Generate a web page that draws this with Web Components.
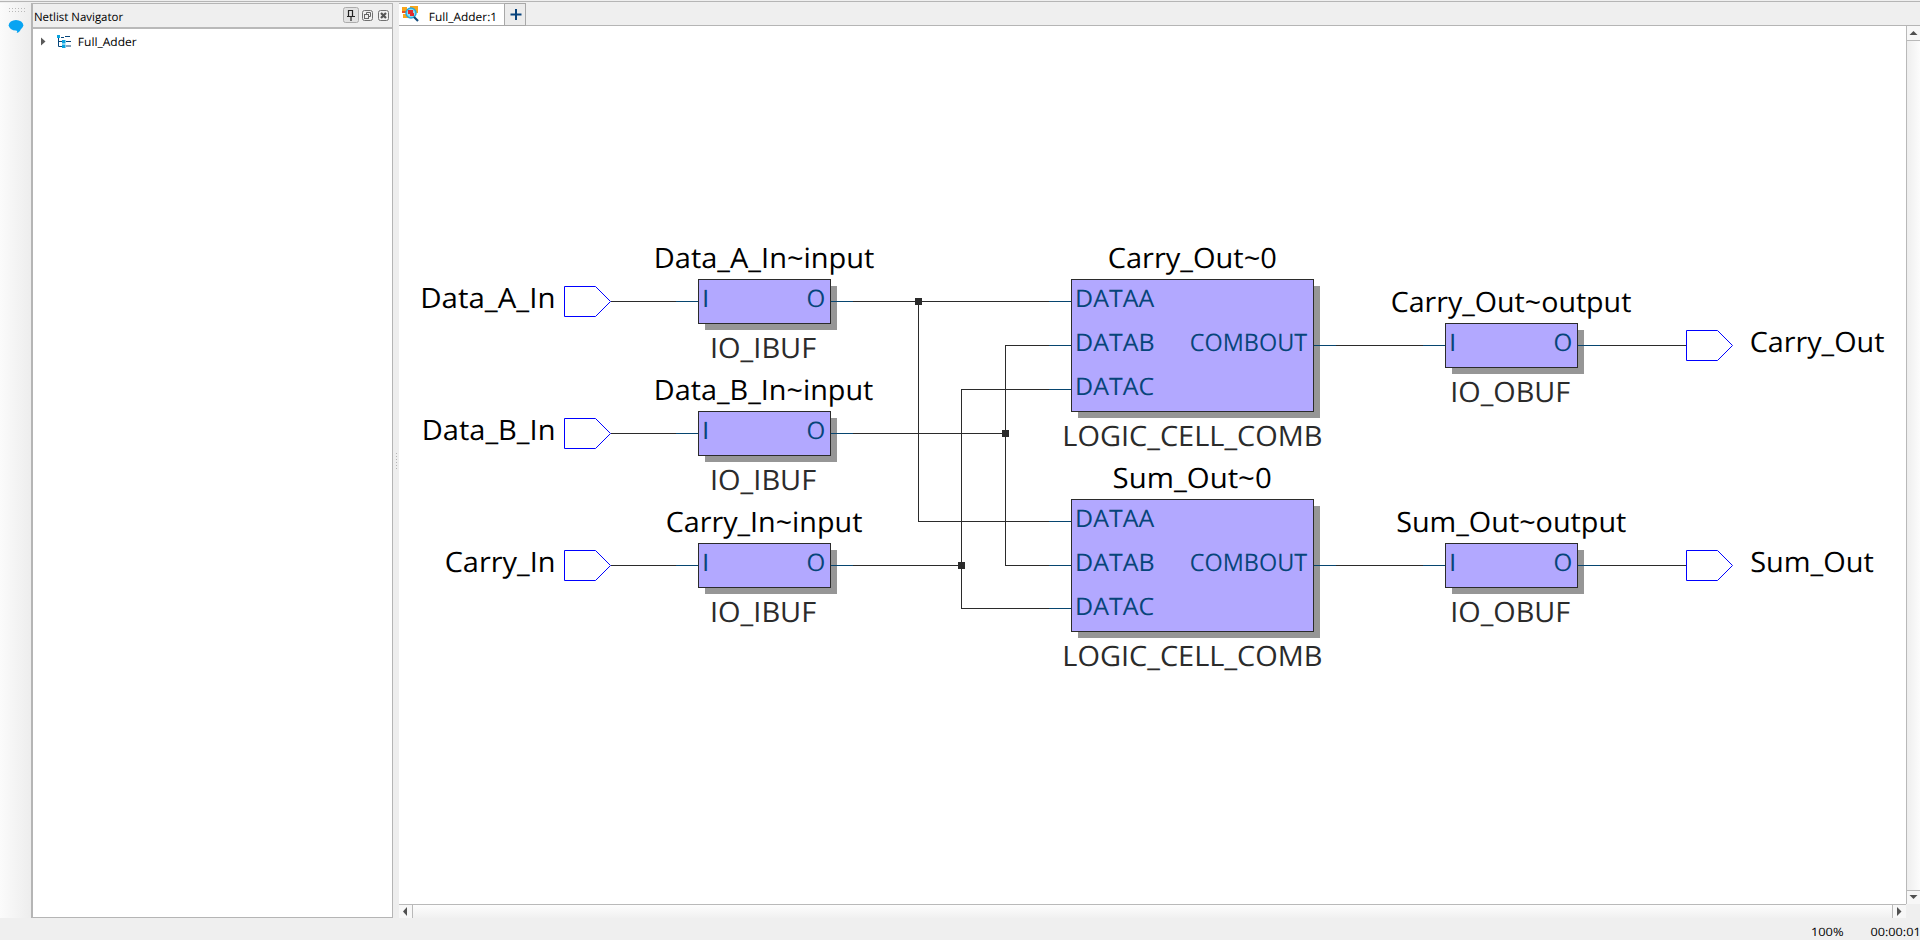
<!DOCTYPE html>
<html lang="en">
<head>
<meta charset="utf-8">
<title>Netlist Viewer</title>
<style>
html,body{margin:0;height:100%;overflow:hidden}
body{font:12px "Open Sans","Noto Sans",sans-serif;color:#000;background:#efefef}
</style>
</head>
<body>
<netlist-app></netlist-app>
<script>
const SVG = 'http://www.w3.org/2000/svg';
const ctx = document.createElement('canvas').getContext('2d');

class BaseElement extends HTMLElement {
  connectedCallback() {
    if (this.shadowRoot) return;
    this.attachShadow({mode: 'open'}).innerHTML = this.render();
    this.ready && this.ready();
  }
}

/* One line of UI text whose ink runs exactly over the given width. */
customElements.define('fit-label', class extends BaseElement {
  render() {
    return `<style>:host{display:block;flex:none;width:${this.getAttribute('w')}px;height:16px}
      svg{display:block;overflow:visible}text{font-family:"Open Sans","Noto Sans",sans-serif}</style>
      <svg width="100%" height="16"></svg>`;
  }
  ready() {
    this.shadowRoot.querySelector('svg').append(
      inkText(this.getAttribute('text'), 0, +this.getAttribute('w'), 12, +(this.getAttribute('size') || 11.5), '#000'));
  }
});

function inkText(str, x1, x2, y, size, fill) {
  ctx.font = (size * 10) + 'px "Open Sans"';
  if (/^[DLFSI]./.test(str)) x1 += 1;
  const m = ctx.measureText(str);
  const left = m.actualBoundingBoxLeft / 10, right = m.actualBoundingBoxRight / 10;
  const k = (x2 - x1) / (right + left);
  const t = document.createElementNS(SVG, 'text');
  t.textContent = str;
  t.setAttribute('font-size', size);
  t.setAttribute('fill', fill);
  t.setAttribute('text-rendering', 'geometricPrecision');
  t.setAttribute('transform', `translate(${x1 + left * k} ${y}) scale(${k} 1)`);
  return t;
}

customElements.define('side-strip', class extends BaseElement {
  render() {
    return `<style>:host{display:block;width:31px;background:linear-gradient(90deg,#fbfbfb,#ededed)}svg{display:block}</style>
    <svg width="31" height="40">
      <path d="M9 5.500h17M9 8.500h17" stroke="#b9b9b9" stroke-dasharray="1 2"/>
      <g fill="#08a4f2"><ellipse cx="16" cy="22.300" rx="7.300" ry="5.300"/><path d="M15.500 27C17.500 27.500 17.500 29 16.500 30C19 29.500 20.500 28 20.800 25.500z"/></g>
    </svg>`;
  }
});

customElements.define('panel-buttons', class extends BaseElement {
  render() {
    return `<style>:host{display:block;width:48px;height:18px}svg{display:block}</style>
    <svg width="48" height="18" fill="none">
      <rect x=".5" y=".5" width="15" height="15" rx="2" fill="#e2e2e2" stroke="#acacac"/>
      <path d="M5.500 3v6M5 3.500h5M9.500 3v6M4 9.500h8M8 10v4" stroke="#222" stroke-width="1.200"/>
      <rect x="19.500" y="3.500" width="10" height="10" rx="2" stroke="#707070"/>
      <path d="M23.500 7.500v-2h4v4h-2" stroke="#666"/><rect x="21.500" y="7.500" width="4" height="4" stroke="#666"/>
      <rect x="35.500" y="3.500" width="10" height="10" rx="2" stroke="#707070"/>
      <path d="M38 6l5 5M43 6l-5 5" stroke="#555" stroke-width="2.200"/>
    </svg>`;
  }
});

customElements.define('navigator-panel', class extends BaseElement {
  render() {
    return `<style>
      :host{display:flex;flex-direction:column;box-sizing:border-box;width:362px;height:915px;border:solid #b5b5b5;border-width:1px 1px 1px 2px;background:#fff}
      header{display:flex;justify-content:space-between;height:23px;background:#efefef;border-bottom:2px solid #b9b9b9}
      header fit-label{margin:5px 0 0 2px}panel-buttons{margin:3px 1px 0 0}
      .row{display:flex;align-items:flex-start;height:24px;padding:5px 0 0 8px}
      .row svg{flex:none}.row fit-label{margin-left:4px}
    </style>
    <header><fit-label text="Netlist Navigator" w="88"></fit-label><panel-buttons></panel-buttons></header>
    <div class="row"><svg width="33" height="18"><path d="M0 3.500L4.500 7.500 0 11.500z" fill="#5a5a5a"/>
      <path d="M17.500 3v9.500H22M17.500 7.500H22M20 3.500h3M24 2.500h5M25 7.500h5M25 12h5" stroke="#06467b" fill="none"/>
      <path d="M16 1h3v3h-3zM21 6h3.500v3.500H21zM21 10.500h3.500V14H21z" fill="#08a4e0"/></svg>
      <fit-label text="Full_Adder" w="58.500"></fit-label></div>`;
  }
});

customElements.define('split-handle', class extends BaseElement {
  render() {
    return `<style>:host{display:flex;width:6px;height:915px;align-items:center;justify-content:center;background:#eee}
      i{width:1px;height:16px;margin-left:1px;background:repeating-linear-gradient(#b4b4b4 0 1px,transparent 1px 3px)}</style><i></i>`;
  }
});

customElements.define('tab-strip', class extends BaseElement {
  render() {
    return `<style>
      :host{display:flex;box-sizing:border-box;height:23px;border-bottom:1px solid #b5b5b5;background:#efefef}
      div{box-sizing:border-box;height:23px;border:1px solid #a8a8a8}
      .tab{display:flex;width:106px;background:#fff;border-left:0;border-top-color:#b5b5b5}
      .tab svg{margin:1px 10px 0 3px;flex:none}.tab fit-label{margin-top:5px}
      .add{width:21px;border-left:0;background:#ececec}svg{display:block}
    </style>
    <div class="tab"><svg width="17" height="18"><path d="M0 2h5v5H0zM8 1h8v7H8zM1 9h7v4H1z" fill="#f9a51a"/>
      <path d="M0 7h4" stroke="#e9531d" stroke-width="2"/>
      <circle cx="9" cy="8" r="5" fill="#84dcf5" stroke="#25a7dd" stroke-width="1.500"/><path d="M6 5h5v3h1v3H8V9H6z" fill="#e22b2f"/><path d="M12 12l4 4" stroke="#114b7d" stroke-width="2.200"/></svg>
      <fit-label text="Full_Adder:1" w="65.500"></fit-label></div>
    <div class="add"><svg width="20" height="21"><path d="M11 5v11M5.500 10.500h11" stroke="#07437d" stroke-width="2"/></svg></div>`;
  }
});

customElements.define('scroll-bar', class extends BaseElement {
  render() {
    const v = this.hasAttribute('vertical');
    return `<style>
      :host{display:flex;box-sizing:border-box;justify-content:space-between;${v
        ? 'flex-direction:column;width:14px;border-left:1px solid #b9b9b9;background:linear-gradient(90deg,#eee,#fcfcfc)'
        : 'height:14px;border-top:1px solid #b9b9b9;background:linear-gradient(#fdfdfd,#f0f0f0)'}}
      svg{display:block;box-sizing:border-box;background:#f7f7f7}
      svg:first-of-type{${v ? 'border-bottom' : 'border-right'}:1px solid #b9b9b9}
      svg:last-of-type{${v ? 'border-top' : 'border-left'}:1px solid #b9b9b9}
    </style>` + (v
      ? `<svg width="13" height="15"><path d="M2.500 9h8l-4-4z" fill="#505050"/></svg><svg width="13" height="14"><path d="M2.500 4h8l-4 4z" fill="#505050"/></svg>`
      : `<svg width="14" height="13"><path d="M8 2v9L4 6.500z" fill="#505050"/></svg><svg width="14" height="13"><path d="M4 2v9L8.500 6.500z" fill="#505050"/></svg>`);
  }
});

/* Schematic: coordinates are those of the sheet, whose origin is at (399,26). */
customElements.define('schematic-view', class extends BaseElement {
  render() {
    return `<style>:host{display:block;background:#fff;overflow:hidden}svg{display:block}text{font-family:"Open Sans","Noto Sans",sans-serif}</style>
      <svg width="1507" height="878" viewBox="399 26 1507 878"></svg>`;
  }
  ready() {
    const svg = this.shadowRoot.querySelector('svg');
    const add = (tag, attrs) => {
      const e = document.createElementNS(SVG, tag);
      for (const k in attrs) e.setAttribute(k, attrs[k]);
      svg.append(e);
    };
    const wire = (d, stroke = '#2b2b2b') => add('path', {d, stroke, fill: 'none', 'shape-rendering': 'crispEdges'});
    const text = (...a) => svg.append(inkText(...a));
    const name = (s, a, b, y) => text(s, a, b, y, 28, '#000');
    const kind = (s, a, b, y) => text(s, a, b, y, 28, '#2b2b2b');
    const pin = (s, a, b, y) => text(s, a, b, y, 24, '#07457a');
    const block = (x, y, w, h) => {
      add('rect', {x: x + 7, y: y + 7, width: w - 1, height: h - 1, fill: '#969696'});
      add('rect', {x: x + .5, y: y + .5, width: w - 1, height: h - 1, fill: '#b2a8ff', stroke: '#2b2b2b'});
    };
    const port = (x, y) => add('path', {d: `M${x + .5} ${y - 14.5}h31l15 15l-15 15h-31z`, fill: '#fff', stroke: '#00f'});
    const stub = (x, y) => wire(`M${x} ${y + .5}h22`, '#07456f');

    const ins = [['Data_A_In', 422, 553.5, 655.5, 874], ['Data_B_In', 423.5, 553.5, 655.5, 873], ['Carry_In', 446, 553.5, 667, 862]];
    const outs = [['Carry_Out', 1109, 1275.7, 1392, 1631, 1751, 1884], ['Sum_Out', 1113, 1270.5, 1396.5, 1626, 1750.5, 1873.5]];
    ins.forEach((_, i) => block(698, 279 + i * 132, 133, 45));
    outs.forEach((_, i) => { block(1071, 279 + i * 220, 243, 133); block(1445, 323 + i * 220, 133, 45); });

    wire('M611 301.500H698M831 301.500H1071M611 433.500H698M831 433.500H1005.500M611 565.500H698M831 565.500H961.500M918.500 301V521.500H1071');
    wire('M1071 345.500H1005.500V565.500H1071M1071 389.500H961.500V608.500H1071');
    wire('M1314 345.500H1445M1578 345.500H1686M1314 565.500H1445M1578 565.500H1686');
    for (const [x, y] of [[915, 298], [1002, 430], [958, 562]]) add('rect', {x, y, width: 7, height: 7, fill: '#2b2b2b'});

    ins.forEach(([s, a, b, c, d], i) => {
      const y = 301 + i * 132;
      name(s, a, b, y + 7); port(564, y);
      stub(676, y); stub(831, y);
      name(s + '~input', c, d, y - 33); kind('IO_IBUF', 711.7, 815.7, y + 57);
      pin('I', 704.5, 706.8, y + 6); pin('O', 808, 824, y + 6);
    });
    outs.forEach(([s, a, b, c, d, e, f], i) => {
      const y = 279 + i * 220;
      name(s + '~0', a, b, y - 11);
      ['DATAA', 'DATAB', 'DATAC'].forEach((p, j) => {
        pin(p, 1076.5, j ? 1153.5 : 1154.3, y + 28 + j * 44);
        stub(1049, y + 22 + j * 44 - (i && j === 2 ? 1 : 0));
      });
      pin('COMBOUT', 1191, 1307, y + 72);
      kind('LOGIC_CELL_COMB', 1064, 1321, y + 167);
      stub(1314, y + 66); stub(1423, y + 66); stub(1578, y + 66);
      name(s + '~output', c, d, y + 33); kind('IO_OBUF', 1452, 1569.7, y + 123);
      pin('I', 1451.5, 1453.8, y + 72); pin('O', 1555, 1571, y + 72);
      port(1686, y + 66); name(s, e, f, y + 73);
    });
  }
});

customElements.define('status-bar', class extends BaseElement {
  render() {
    return `<style>:host{display:flex;justify-content:flex-end;gap:28px;height:22px;padding:6px 2px 0 0;box-sizing:border-box}</style>
      <fit-label text="100%" w="31"></fit-label><fit-label text="00:00:01" w="47"></fit-label>`;
  }
});

customElements.define('netlist-app', class extends BaseElement {
  render() {
    return `<style>
      :host{display:grid;grid-template:3px 915px 22px / 31px 362px 6px 1fr;width:1920px;height:940px;background:#efefef}
      .top{grid-column:1/-1;box-sizing:border-box;height:2px;border-bottom:1px solid #b5b5b5}
      .work{display:grid;grid-template:23px 878px 14px / 1507px 14px}
      tab-strip{grid-column:1/-1}scroll-bar:not([vertical]){grid-column:1}
      side-strip{grid-row:2}status-bar{grid-column:1/-1}
    </style>
    <div class="top"></div>
    <side-strip></side-strip><navigator-panel></navigator-panel><split-handle></split-handle>
    <div class="work"><tab-strip></tab-strip><schematic-view></schematic-view><scroll-bar vertical></scroll-bar><scroll-bar></scroll-bar></div>
    <status-bar></status-bar>`;
  }
});
</script>
</body>
</html>
